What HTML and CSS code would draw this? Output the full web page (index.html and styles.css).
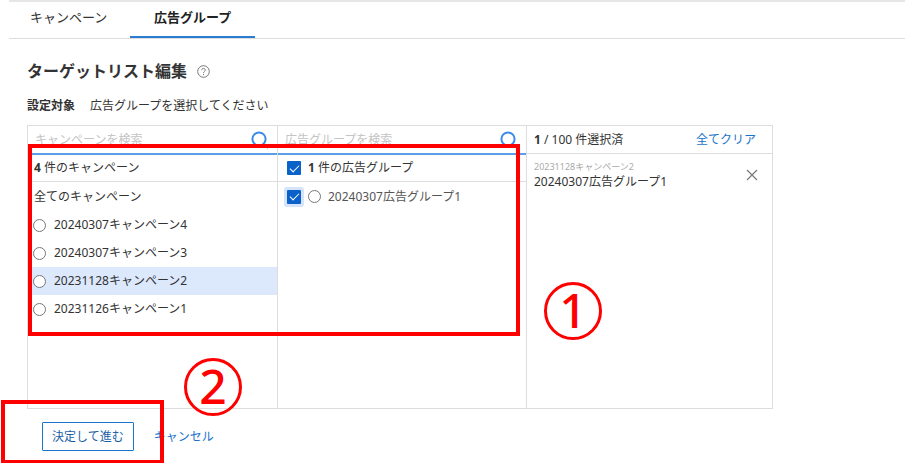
FILE: index.html
```html
<!DOCTYPE html>
<html lang="ja">
<head>
    <meta charset="UTF-8">
    <meta name="viewport" content="width=device-width, initial-scale=1.0">
    <title>ターゲットリスト編集</title>
    <link rel="stylesheet" href="styles.css">
</head>
<body>
    <nav class="tabs">
        <a class="tab" href="#campaign">キャンペーン</a>
        <a class="tab active" href="#adgroup">広告グループ</a>
    </nav>

    <main class="content">
        <h1 class="title">
            ターゲットリスト編集
            <svg class="help" viewBox="0 0 13 13" fill="none" stroke="#777">
                <circle cx="6.5" cy="6.5" r="5.8"/>
                <path d="M4.7 5.2c0-2.4 3.6-2.3 3.6-.1 0 1.3-1.8 1.3-1.8 2.8M6.5 9v1.1"/>
            </svg>
        </h1>
        <p class="target"><b>設定対象</b><span>広告グループを選択してください</span></p>

        <div class="picker">
            <section class="column">
                <div class="search">
                    <input type="text" aria-label="キャンペーンを検索" placeholder="キャンペーンを検索">
                    <svg class="search-icon" viewBox="0 0 18 18" fill="none" stroke="#3b8beb" stroke-width="2">
                        <circle cx="9" cy="8" r="6.6"/>
                        <path d="M14 13l4 4"/>
                    </svg>
                </div>
                <div class="summary"><span><b>4</b> 件のキャンペーン</span></div>
                <div class="all">全てのキャンペーン</div>
                <label class="item"><input type="radio" name="campaign">20240307キャンペーン4</label>
                <label class="item"><input type="radio" name="campaign">20240307キャンペーン3</label>
                <label class="item selected"><input type="radio" name="campaign">20231128キャンペーン2</label>
                <label class="item"><input type="radio" name="campaign">20231126キャンペーン1</label>
            </section>

            <section class="column">
                <div class="search">
                    <input type="text" aria-label="広告グループを検索" placeholder="広告グループを検索">
                    <svg class="search-icon" viewBox="0 0 18 18" fill="none" stroke="#3b8beb" stroke-width="2">
                        <circle cx="9" cy="8" r="6.6"/>
                        <path d="M14 13l4 4"/>
                    </svg>
                </div>
                <label class="summary check-row">
                    <input type="checkbox" checked>
                    <span><b>1</b> 件の広告グループ</span>
                </label>
                <div class="all check-row">
                    <input type="checkbox" class="focused" id="group1" checked>
                    <input type="radio" name="group" aria-label="20240307広告グループ1">
                    <label class="group-name" for="group1">20240307広告グループ1</label>
                </div>
            </section>

            <section class="column">
                <div class="chosen-head">
                    <span><b>1</b> / 100 件選択済</span>
                    <a href="#clear">全てクリア</a>
                </div>
                <div class="chosen">
                    <div>
                        <div class="chosen-parent">20231128キャンペーン2</div>
                        <div class="chosen-name">20240307広告グループ1</div>
                    </div>
                    <button class="remove" aria-label="削除">
                        <svg viewBox="0 0 12 12" stroke="#777" stroke-width="1.2">
                            <path d="M1 1l10 10M11 1L1 11"/>
                        </svg>
                    </button>
                </div>
            </section>
        </div>

        <div class="actions">
            <button class="submit">決定して進む</button>
            <a href="#cancel">キャンセル</a>
        </div>
    </main>

    <!-- 手順の注釈 -->
    <div class="mark mark-select"></div>
    <div class="mark mark-submit"></div>
    <div class="step step-1">1</div>
    <div class="step step-2">2</div>
</body>
</html>
```

FILE: styles.css
```css
* {
    box-sizing: border-box;
}
body {
    margin: 0;
    position: relative;
    background-color: #fff;
    color: #333;
    font-family: "Noto Sans", "Noto Sans CJK JP", sans-serif;
    font-size: 12px;
    line-height: 16px;
}
a {
    color: #1a73cc;
    text-decoration: none;
}
input, button {
    margin: 0;
    font: inherit;
}
.tabs {
    display: flex;
    height: 39px;
    margin-left: 9px;
    border-top: 2px solid #e6e6e6;
    border-bottom: 1px solid #ddd;
}
.tab {
    padding: 7px 0 0 21px;
    width: 121px;
    color: #333;
    font-size: 13px;
}
.tab.active {
    width: 125px;
    padding: 7px 0 0 24px;
    color: #222;
    font-weight: bold;
    border-bottom: 2px solid #2b7cd3;
}
.content {
    padding: 20px 27px 12px;
}
.title {
    display: flex;
    align-items: center;
    gap: 10px;
    margin: 0 0 13px;
    font-size: 16px;
    line-height: 24px;
}
.help {
    width: 13px;
    height: 13px;
}
.target {
    display: flex;
    gap: 15px;
    margin: 0 0 9px;
    line-height: 20px;
}
.picker {
    display: grid;
    grid-template-columns: 249fr 249fr 246fr;
    max-width: 746px;
    min-height: 284px;
    border: 1px solid #ddd;
}
.column + .column {
    border-left: 1px solid #ddd;
}
.search {
    display: flex;
    align-items: center;
    height: 29px;
    padding: 0 9px 0 7px;
    border-bottom: 2px solid #5b9de8;
}
.search input {
    flex: 1;
    min-width: 0;
    padding: 0;
    border: none;
    outline: none;
    background: none;
}
.search input::placeholder {
    color: #c4c4c4;
}
.search-icon {
    width: 18px;
    height: 18px;
}
.summary {
    display: flex;
    align-items: center;
    height: 27px;
    padding: 0 6px;
    border-bottom: 1px solid #ddd;
}
.all {
    display: flex;
    align-items: center;
    height: 29px;
    padding: 0 6px;
}
.item {
    display: flex;
    align-items: center;
    gap: 8px;
    height: 28px;
    padding: 0 5px;
}
.item.selected {
    background-color: #dce8fc;
}
input[type="radio"] {
    appearance: none;
    width: 13px;
    height: 13px;
    border: 1px solid #777;
    border-radius: 50%;
    background-color: #fff;
}
input[type="checkbox"] {
    appearance: none;
    display: grid;
    place-items: center;
    width: 14px;
    height: 14px;
    border-radius: 1px;
    background-color: #0a62c9;
}
input[type="checkbox"]::after {
    content: "";
    width: 8px;
    height: 4px;
    margin-bottom: 2px;
    border-left: 1px solid #fff;
    border-bottom: 1px solid #fff;
    transform: rotate(-45deg);
}
input[type="checkbox"].focused {
    box-shadow: 0 0 0 3px #d5e4fa;
}
.check-row {
    gap: 7px;
    padding-left: 9px;
}
.group-name {
    color: #555;
}
.chosen-head {
    display: flex;
    justify-content: space-between;
    align-items: center;
    height: 28px;
    padding: 0 16px 0 7px;
    border-bottom: 1px solid #ddd;
}
.chosen {
    display: flex;
    justify-content: space-between;
    align-items: center;
    padding: 6px 14px 0 7px;
}
.chosen-parent {
    color: #aaa;
    font-size: 9px;
    line-height: 14px;
}
.remove {
    display: flex;
    padding: 0;
    border: none;
    background: none;
}
.remove svg {
    width: 12px;
    height: 12px;
}
.actions {
    display: flex;
    align-items: center;
    gap: 20px;
    margin: 13px 0 0 15px;
}
.submit {
    height: 29px;
    padding: 0 9px;
    border: 1px solid #1a73cc;
    border-radius: 1px;
    background-color: #fff;
    color: #1a5fa8;
}
.mark {
    position: absolute;
    border: 4px solid #f00;
    pointer-events: none;
}
.mark-select {
    top: 144px;
    left: 28px;
    width: 492px;
    height: 192px;
}
.mark-submit {
    top: 400px;
    left: 1px;
    width: 163px;
    height: 64px;
}
.step {
    position: absolute;
    width: 58px;
    height: 58px;
    border: 3px solid #f00;
    border-radius: 50%;
    color: #f00;
    font-size: 48px;
    font-weight: 500;
    line-height: 50px;
    text-align: center;
}
.step-1 {
    top: 282px;
    left: 544px;
}
.step-2 {
    top: 358px;
    left: 184px;
}
```
